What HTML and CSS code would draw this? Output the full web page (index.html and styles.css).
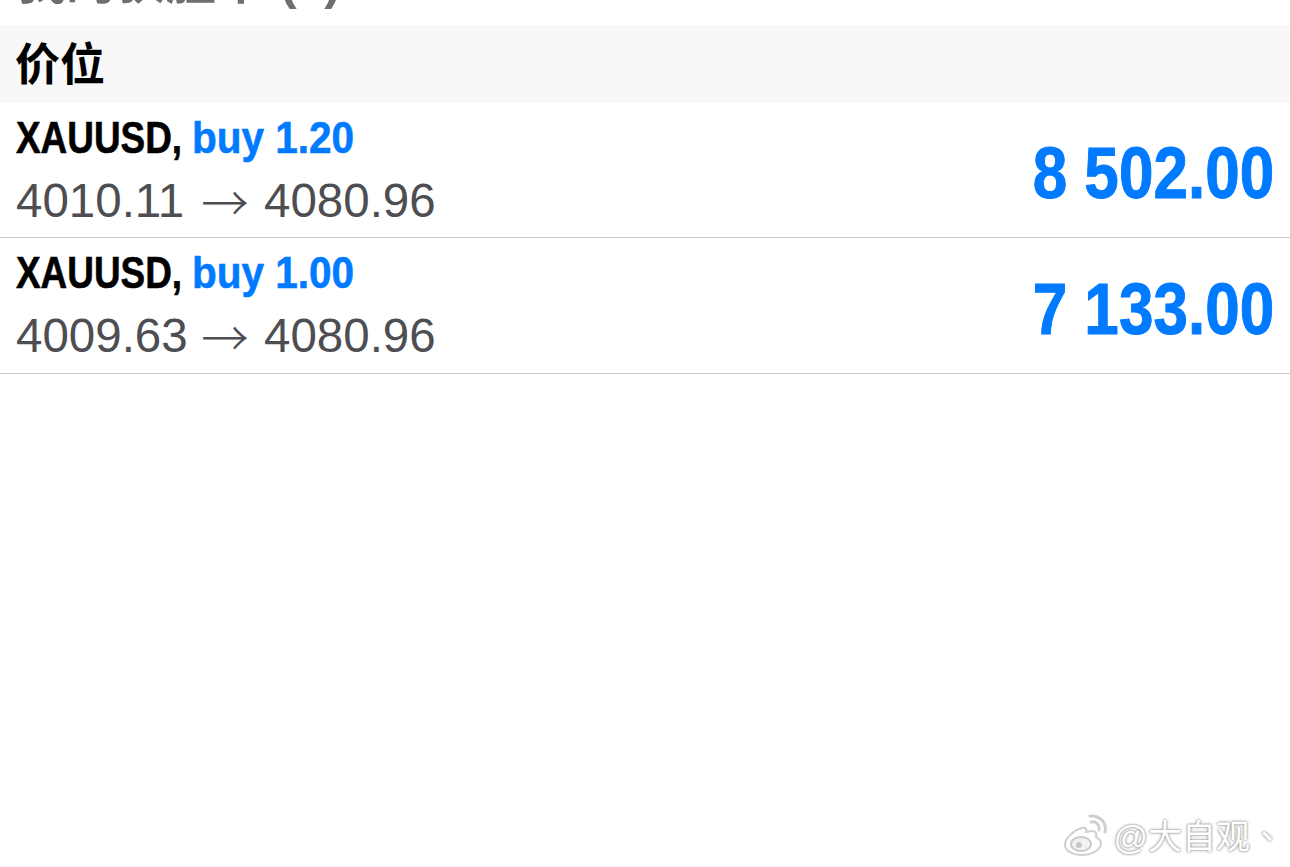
FILE: index.html
```html
<!DOCTYPE html>
<html>
<head>
  <meta charset="utf-8">
  <title>价位</title>
  <link rel="stylesheet" href="styles.css">
</head>
<body>
  <div class="cut-title"><span>我的获胜单 (2)</span></div>
  <div class="section">价位</div>
  <ul class="trades">
    <li class="trade">
      <div class="info">
        <div class="head"><b class="sym">XAUUSD,</b><b class="order">buy 1.20</b></div>
        <div class="prices"><span class="num">4010.11</span><span class="arrow">→</span><span class="num">4080.96</span></div>
      </div>
      <div class="profit">8 502.00</div>
    </li>
    <li class="trade">
      <div class="info">
        <div class="head"><b class="sym">XAUUSD,</b><b class="order">buy 1.00</b></div>
        <div class="prices"><span class="num">4009.63</span><span class="arrow">→</span><span class="num">4080.96</span></div>
      </div>
      <div class="profit">7 133.00</div>
    </li>
  </ul>
  <div class="mark">
    <svg class="weibo" width="48" height="42" viewBox="0 0 48 42">
      <path d="M19 14C11 16 2 24 2 31c0 6 8 10 17 10 11 0 19-6 19-12 0-4-4-5-5-6 1-3 0-6-4-6-3 0-5 1-6 1 1-3 0-5-4-4z" fill="#fff" stroke="#cfcfcf" stroke-width="2"/>
      <ellipse cx="18" cy="30" rx="10" ry="7" fill="#f2f2f2" stroke="#cacaca" stroke-width="2"/>
      <circle cx="16" cy="31" r="3" fill="#c8c8c8"/>
      <path d="M28 8c5-1 9 3 8 8M27 2c9-1 17 6 15 16" fill="none" stroke="#cfcfcf" stroke-width="3" stroke-linecap="round"/>
    </svg>
    <span class="name">@大自观<span class="comma" lang="zh-TW">、</span></span>
  </div>
</body>
</html>
```

FILE: styles.css
```css
* {
  box-sizing: border-box;
}
html, body {
  height: 100%;
}
body {
  margin: 0;
  background: #fff;
  font-family: "Liberation Sans", "Noto Sans CJK SC", sans-serif;
  position: relative;
  overflow: hidden;
}

/* title scrolled off the top, only the bottom of it shows */
.cut-title {
  height: 25px;
  padding-left: 16px;
  overflow: hidden;
  display: flex;
  align-items: flex-end;
}
.cut-title span {
  font-size: 50px;
  line-height: 50px;
  font-weight: bold;
  color: #6e6e6e;
  margin-bottom: 18px;
  white-space: nowrap;
  flex-shrink: 0;
}

.section {
  height: 78px;
  padding: 3px 0 0 15px;
  background: #f8f8f8;
  color: #000;
  font-size: 45px;
  font-weight: bold;
  line-height: 75px;
}

.trades {
  margin: 0;
  padding: 0;
  list-style: none;
}
.trade {
  height: 135px;
  padding: 11px 16px 0 16px;
  border-bottom: 1px solid #c8c8ca;
  display: flex;
  justify-content: space-between;
  align-items: center;
}
.trade:last-child {
  height: 136px;
}
.info {
  align-self: flex-start;
}

/* the reference font is a narrow one, so the bold runs are squeezed */
.head {
  display: flex;
  font-size: 45px;
  line-height: 48px;
  color: #000;
  white-space: nowrap;
  -webkit-text-stroke: .6px currentColor;
}
.sym {
  width: 176px;
  transform: scaleX(.82);
  transform-origin: left center;
}
.order {
  color: #007aff;
  transform: scaleX(.9);
  transform-origin: left center;
}
.prices {
  display: flex;
  margin-top: 9px;
  font-size: 47.5px;
  line-height: 60px;
  color: #4d4d52;
  white-space: nowrap;
}
.arrow {
  width: 78px;
  text-align: center;
  font-family: "Noto Sans CJK SC", sans-serif;
  font-weight: 300;
}
.num {
  width: 170px;
}
.profit {
  margin-top: -6px;
  font-size: 73px;
  font-weight: bold;
  color: #007aff;
  white-space: nowrap;
  -webkit-text-stroke: 1px currentColor;
  transform: scaleX(.85);
  transform-origin: right center;
}

.mark {
  position: absolute;
  right: 6px;
  bottom: 8px;
  display: flex;
  align-items: center;
  gap: 2px;
  color: #fff;
  font-size: 34px;
  text-shadow: 0 0 3px #888, 0 0 2px #aaa;
}
.comma {
  font-family: "Noto Sans CJK TC", sans-serif;
}
```
